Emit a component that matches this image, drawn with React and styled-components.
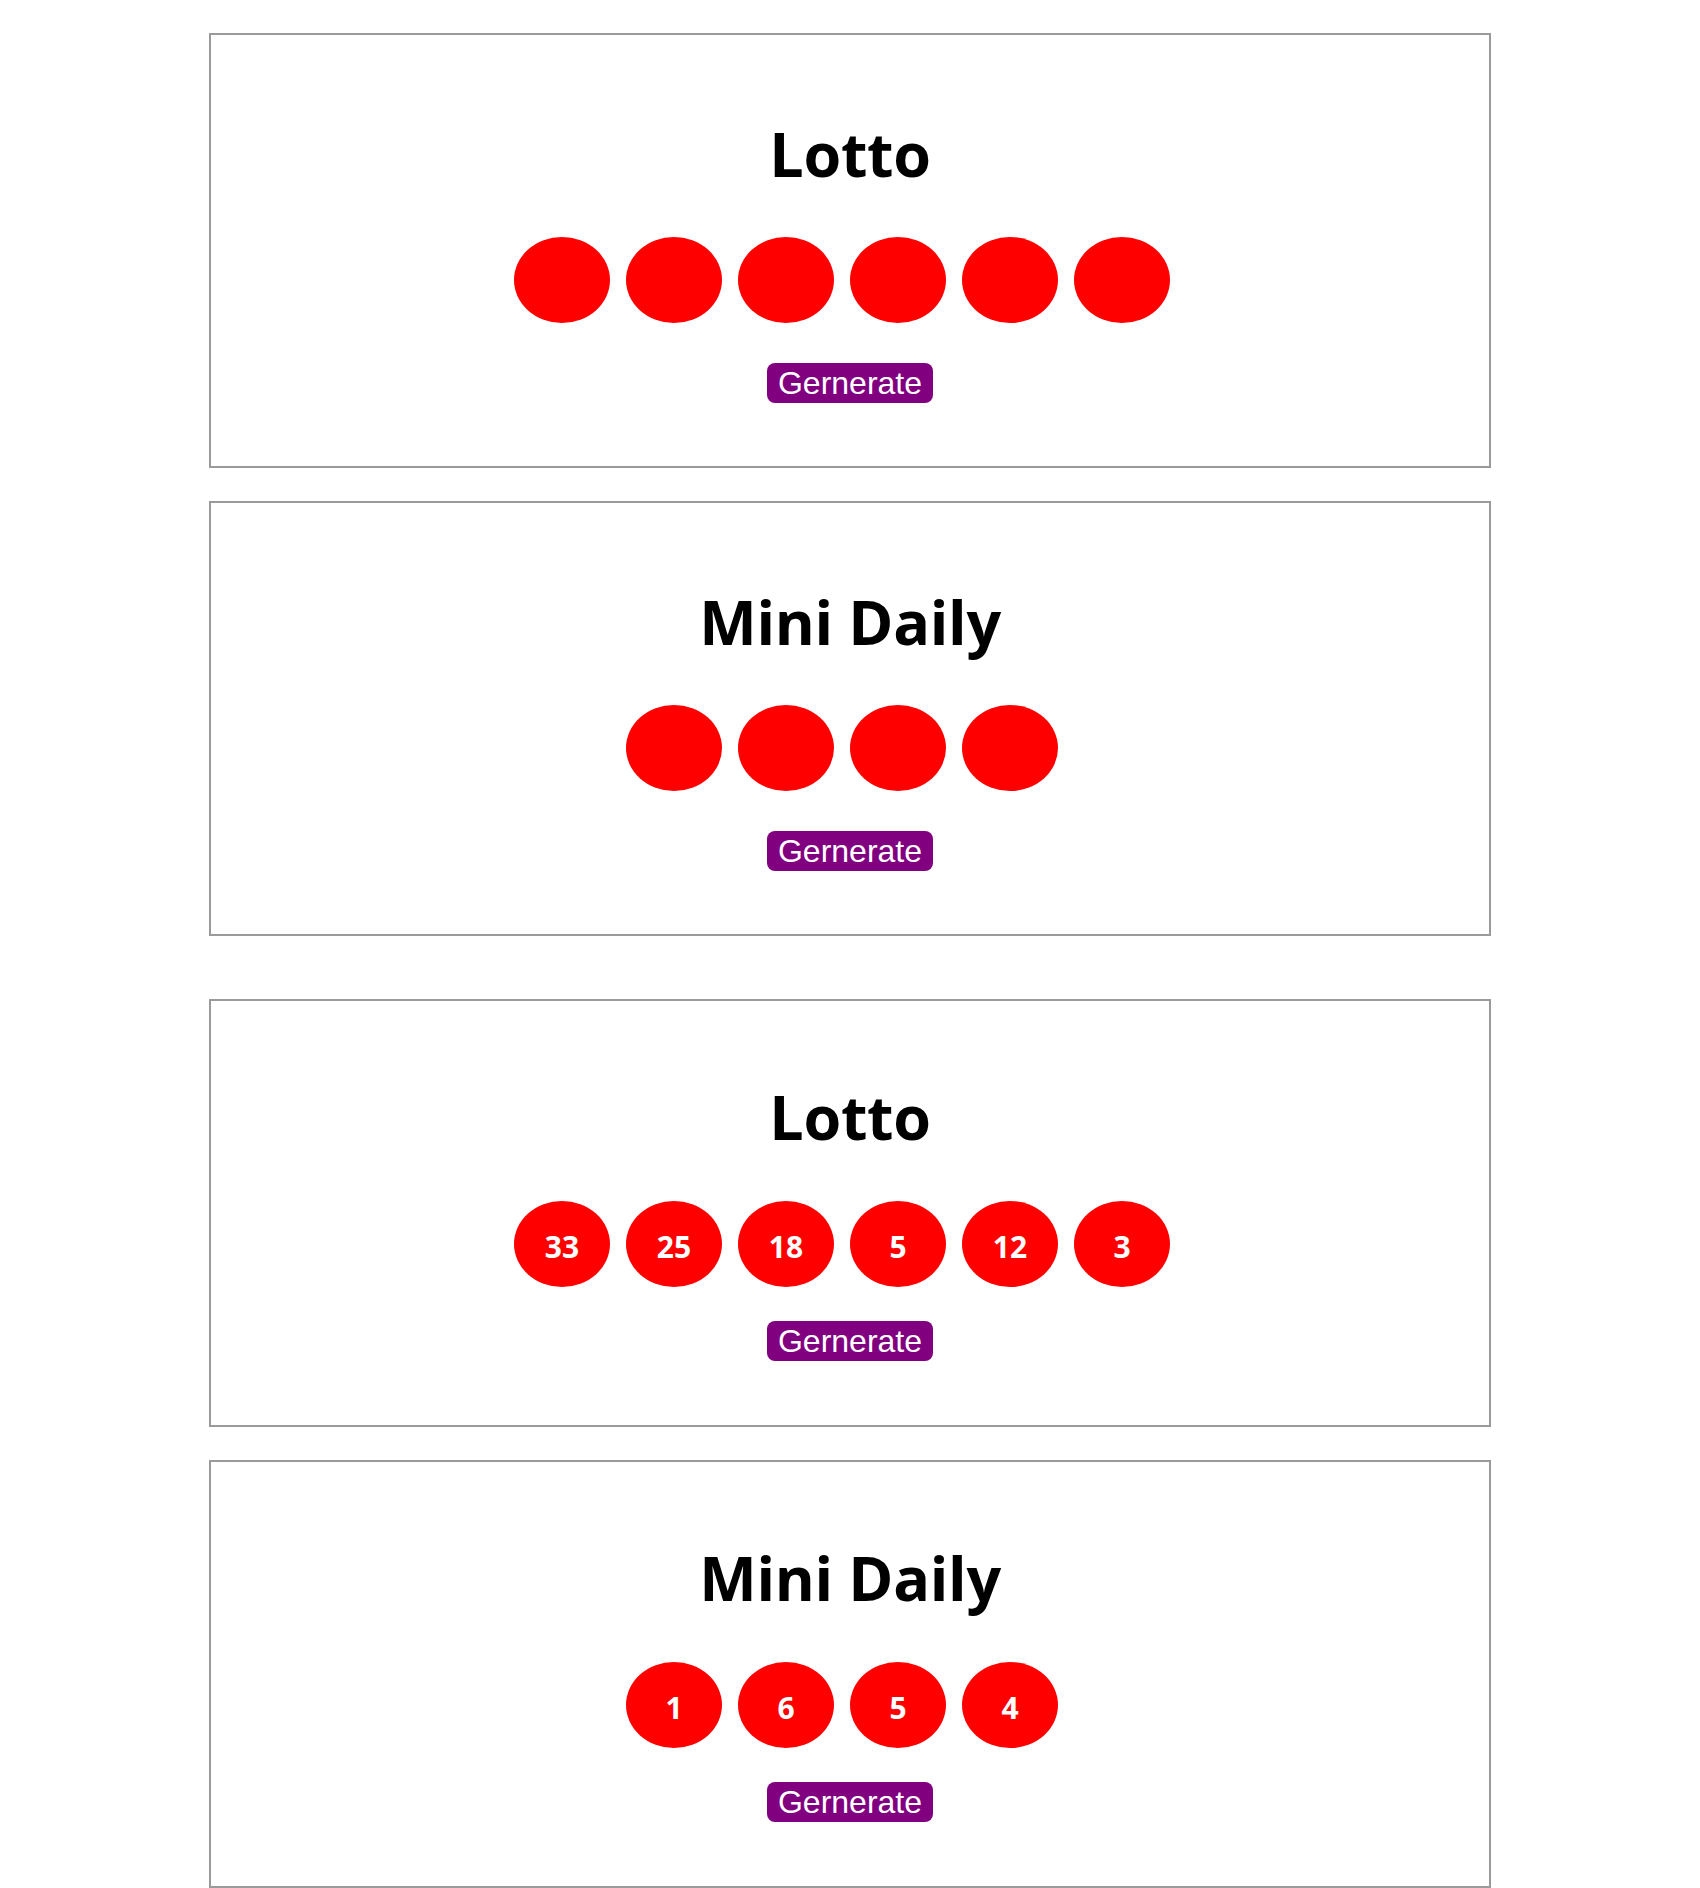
import styled, { createGlobalStyle } from 'styled-components';

const GlobalStyle = createGlobalStyle`
  html, body {
    margin: 0;
    padding: 0;
    background: #fff;
  }

  body {
    font-family: "Open Sans", "Noto Sans", sans-serif;
  }
`;

const ballColor = '#ff0000';
const buttonColor = '#800080';
const borderColor = '#9a9a9a';

const Page = styled.main`
  display: flex;
  flex-direction: column;
  gap: 30px;
  width: 1282px;
  margin: 0 auto;
`;

const Section = styled.section`
  display: flex;
  flex-direction: column;
  gap: 33px;
  padding-top: 33px;
`;

const Card = styled.div`
  display: flex;
  flex-direction: column;
  align-items: center;
  border: 2px solid ${borderColor};
  padding: ${({ $drawn }) => ($drawn ? '85px 0 64px' : '88px 0 63px')};
`;

const Title = styled.h1`
  margin: 0;
  font-size: 61px;
  line-height: 62px;
  font-weight: 700;
  letter-spacing: -0.3px;
  color: #000;
`;

const BallRow = styled.div`
  display: flex;
  justify-content: center;
  margin-top: ${({ $drawn }) => ($drawn ? '53px' : '52px')};
`;

const Ball = styled.div`
  display: flex;
  align-items: center;
  justify-content: center;
  width: 96px;
  height: 86px;
  padding-top: 4px;
  box-sizing: border-box;
  margin-right: 16px;
  border-radius: 50%;
  background-color: ${ballColor};

  font-size: 30px;
  font-weight: 700;
  color: #fff;
`;

const GenerateButton = styled.button`
  margin-top: ${({ $drawn }) => ($drawn ? '34px' : '40px')};
  height: 40px;
  padding: 0 11px;
  border: none;
  border-radius: 8px;
  background-color: ${buttonColor};

  font-family: "Liberation Sans", Arial, sans-serif;
  font-size: 32px;
  line-height: 40px;
  color: #fff;
  cursor: pointer;
`;

const games = [
  { name: 'Lotto', size: 6 },
  { name: 'Mini Daily', size: 4 },
];

const drawnNumbers = {
  Lotto: [33, 25, 18, 5, 12, 3],
  'Mini Daily': [1, 6, 5, 4],
};

const LotteryCard = ({ name, size, numbers }) => {
  const drawn = Boolean(numbers);
  const balls = drawn ? numbers : Array.from({ length: size }, () => null);

  return (
    <Card $drawn={drawn}>
      <Title>{name}</Title>
      <BallRow $drawn={drawn}>
        {balls.map((value, index) => (
          <Ball key={index}>{value}</Ball>
        ))}
      </BallRow>
      <GenerateButton $drawn={drawn}>Gernerate</GenerateButton>
    </Card>
  );
};

const App = () => (
  <>
    <GlobalStyle />
    <Page>
      <Section>
        {games.map((game) => (
          <LotteryCard key={game.name} name={game.name} size={game.size} />
        ))}
      </Section>
      <Section>
        {games.map((game) => (
          <LotteryCard
            key={game.name}
            name={game.name}
            size={game.size}
            numbers={drawnNumbers[game.name]}
          />
        ))}
      </Section>
    </Page>
  </>
);

export default App;
